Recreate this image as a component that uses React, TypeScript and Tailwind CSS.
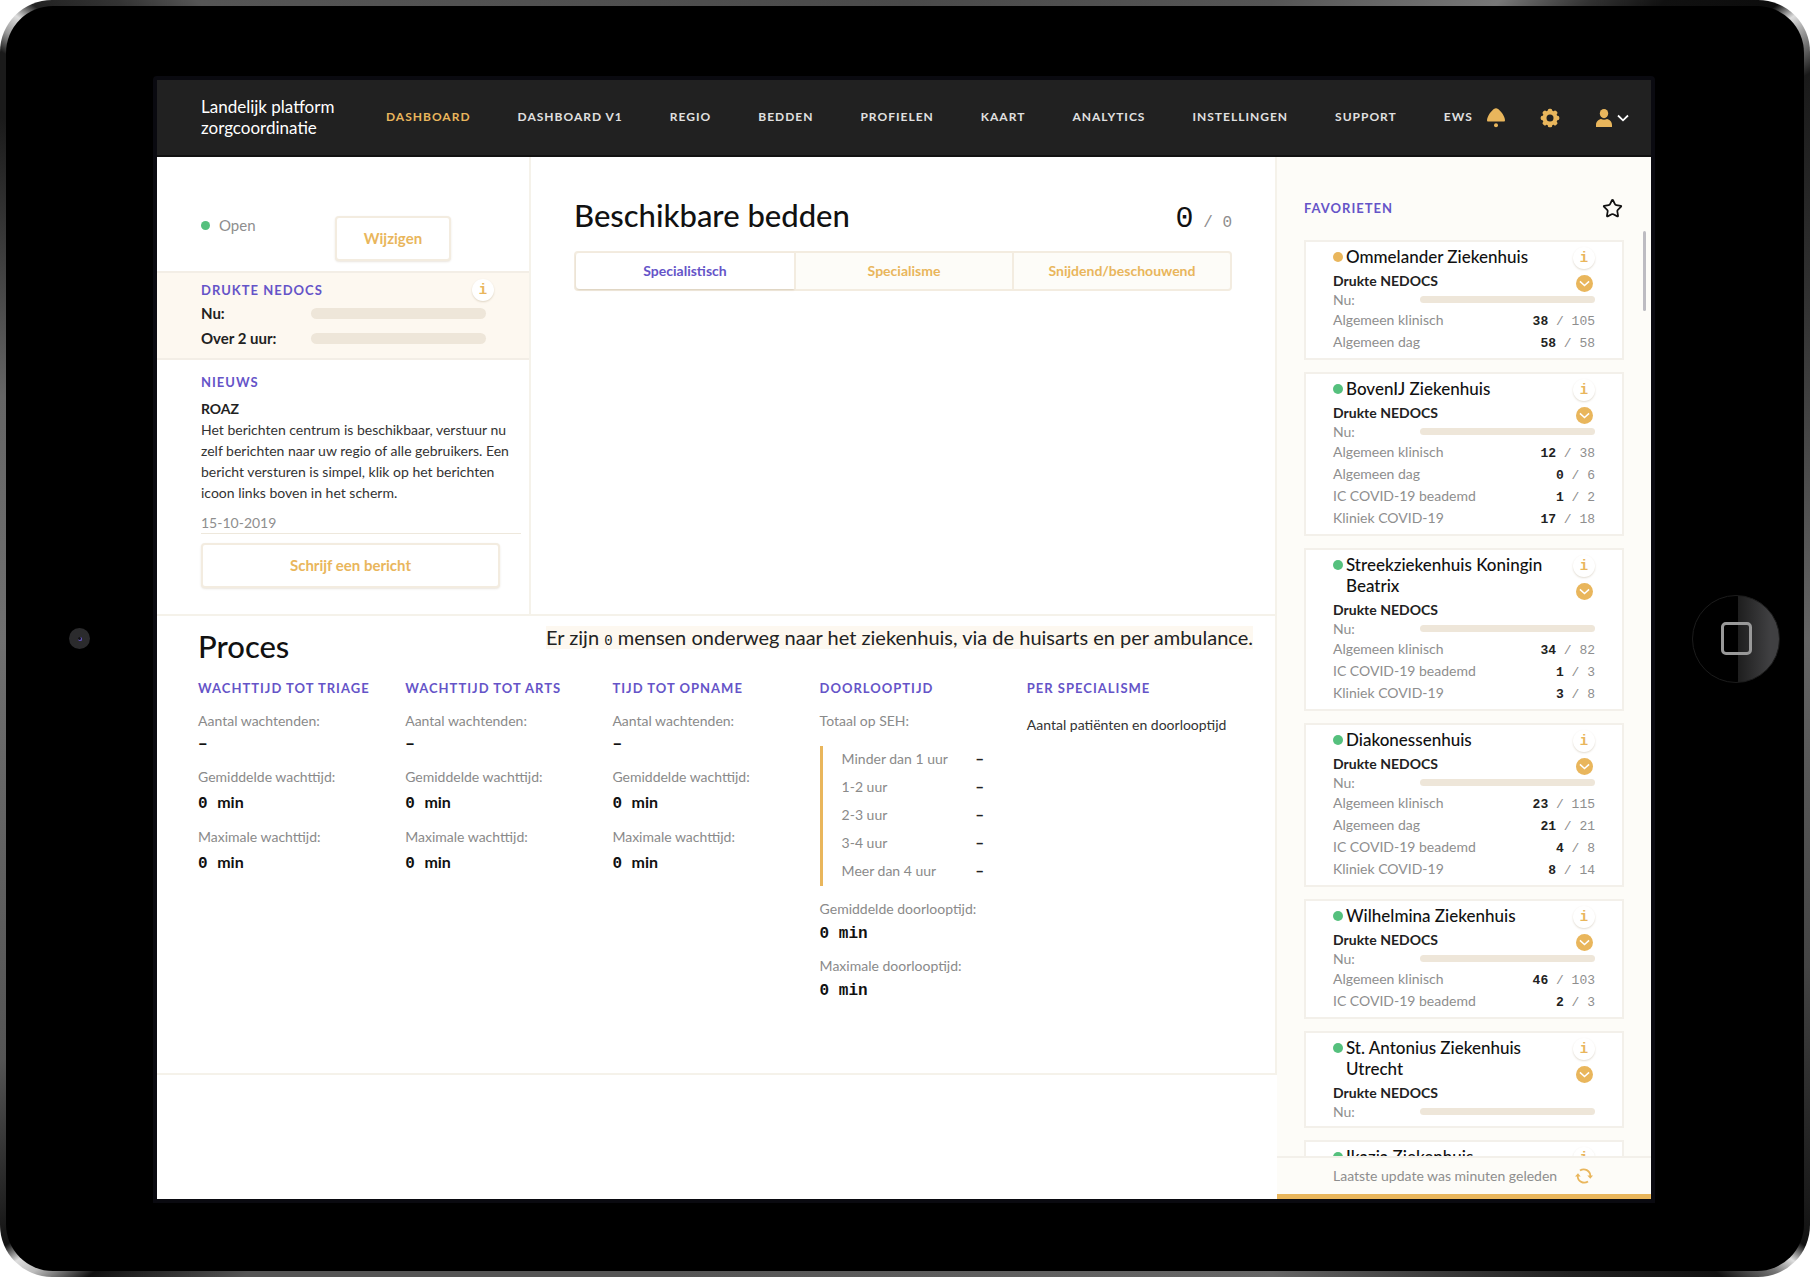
import React from "react";
import { Star } from "lucide-react";

const NAV = ["DASHBOARD", "DASHBOARD V1", "REGIO", "BEDDEN", "PROFIELEN", "KAART", "ANALYTICS", "INSTELLINGEN", "SUPPORT", "EWS"];

type Hospital = { name: string; tone?: "busy"; loading?: boolean; beds: [string, number, number][] };

const HOSPITALS: Hospital[] = [
  { name: "Ommelander Ziekenhuis", tone: "busy", beds: [["Algemeen klinisch", 38, 105], ["Algemeen dag", 58, 58]] },
  { name: "BovenIJ Ziekenhuis", beds: [["Algemeen klinisch", 12, 38], ["Algemeen dag", 0, 6], ["IC COVID-19 beademd", 1, 2], ["Kliniek COVID-19", 17, 18]] },
  { name: "Streekziekenhuis Koningin Beatrix", beds: [["Algemeen klinisch", 34, 82], ["IC COVID-19 beademd", 1, 3], ["Kliniek COVID-19", 3, 8]] },
  { name: "Diakonessenhuis", beds: [["Algemeen klinisch", 23, 115], ["Algemeen dag", 21, 21], ["IC COVID-19 beademd", 4, 8], ["Kliniek COVID-19", 8, 14]] },
  { name: "Wilhelmina Ziekenhuis", beds: [["Algemeen klinisch", 46, 103], ["IC COVID-19 beademd", 2, 3]] },
  { name: "St. Antonius Ziekenhuis Utrecht", beds: [] },
  { name: "Ikazia Ziekenhuis", loading: true, beds: [] },
];

const WAITS = ["WACHTTIJD TOT TRIAGE", "WACHTTIJD TOT ARTS", "TIJD TOT OPNAME"];
const DURATIONS = ["Minder dan 1 uur", "1-2 uur", "2-3 uur", "3-4 uur", "Meer dan 4 uur"];
const TABS = ["Specialistisch", "Specialisme", "Snijdend/beschouwend"];

function Heading({ children }: { children: React.ReactNode }) {
  return <h2 className="text-[13px] leading-4 font-bold tracking-[1px] whitespace-nowrap text-[#6554c8]">{children}</h2>;
}

function InfoButton() {
  return (
    <button aria-label="Informatie" className="flex size-[22px] shrink-0 items-center justify-center rounded-full bg-white font-['Liberation_Mono',monospace] text-sm font-bold text-[#e9b65c] shadow-[0_1px_2px_rgba(120,90,40,0.22)]">
      i
    </button>
  );
}

function BellIcon() {
  return (
    <svg viewBox="0 0 18 20" className="h-5 w-[18px]" fill="#e9b65c">
      <path d="M9 0.300C10.600.3 11.500 1.300 12.700 2.400 14.800 4.200 16.200 6.400 17.200 9c.5 1.300.8 2.300.8 3.300 0 .9-.4 1.300-1.200 1.300H1.200C.4 13.600 0 13.200 0 12.300 0 11.300.3 10.300.8 9 1.800 6.400 3.200 4.200 5.300 2.400 6.500 1.300 7.400.3 9 .3z" />
      <circle cx="9" cy="17.300" r="2" />
    </svg>
  );
}

function GearIcon() {
  return (
    <svg viewBox="0 0 20 20" className="size-5">
      <g fill="#e9b65c">
        {[0, 45, 90, 135].map((a) => (
          <rect key={a} x="7.800" y="0.700" width="4.400" height="18.600" rx="1.600" transform={`rotate(${a} 10 10)`} />
        ))}
        <circle cx="10" cy="10" r="7.600" />
      </g>
      <circle cx="10" cy="10" r="3.500" fill="#212121" />
    </svg>
  );
}

function UserIcon() {
  return (
    <svg viewBox="0 0 16 18" className="h-[18px] w-4" fill="#e9b65c">
      <ellipse cx="8" cy="4.600" rx="4.200" ry="4.600" />
      <path d="M0 18v-2C0 12.800 2.400 10.600 5 10c1.800 1 4.200 1 6 0 2.600.6 5 2.800 5 6v2z" />
    </svg>
  );
}

function RefreshIcon() {
  return (
    <svg viewBox="0 0 18 16" className="h-4 w-[18px]" fill="none" stroke="#e9b65c" strokeWidth="1.800">
      <path d="M5 2.600A6.500 6.500 0 0 1 15.300 8M13 13.400A6.500 6.500 0 0 1 2.700 8" />
      <path d="M12.300 7.500h5.700l-2.700 3.300zM0 8.500h5.700L3 5.200z" fill="#e9b65c" stroke="none" />
    </svg>
  );
}

function HospitalCard({ name, tone, loading, beds }: Hospital) {
  return (
    <article className="shrink-0 border-2 border-[#f3f0ea] bg-white px-[27px] pt-1 pb-[5px]">
      <div className="relative pr-10">
        <h3 className="flex gap-[3px] text-[17px] leading-[21px] font-medium text-[#111]">
          <span className={tone === "busy" ? "mt-[6px] size-[10px] shrink-0 rounded-full bg-[#e9b65c]" : "mt-[6px] size-[10px] shrink-0 rounded-full bg-[#55c07d]"} />
          {name}
        </h3>
        <div className="absolute top-px right-0 flex flex-col items-center gap-1.5">
          <InfoButton />
          <button aria-label="Toon meer" className="flex size-[17px] items-center justify-center rounded-full bg-[#e9b65c]">
            <svg viewBox="0 0 12 8" className="w-[11px]" fill="none" stroke="#fff" strokeWidth="1.600"><path d="M1 1.500 6 6l5-4.500" /></svg>
          </button>
        </div>
      </div>
      {!loading && (
        <>
          <p className="mt-[5px] text-sm leading-[18px] font-bold text-[#222]">Drukte NEDOCS</p>
          <div className="flex h-[19px] items-center justify-between text-sm text-[#8e8e8e]">
            Nu:
            <span className="h-[7px] w-2/3 rounded-full bg-[#eee6d9]" />
          </div>
        </>
      )}
      {beds.map(([label, used, total]) => (
        <div key={label} className="flex h-[22px] items-center justify-between text-sm text-[#8e8e8e]">
          {label}
          <span className="pt-1 font-['Liberation_Mono',monospace] text-[13px] leading-4 whitespace-pre">
            <b className="text-[#222]">{used}</b> / {total}
          </span>
        </div>
      ))}
    </article>
  );
}

function Label({ children }: { children: React.ReactNode }) {
  return <p className="text-sm leading-[22px] text-[#8a8a8a]">{children}</p>;
}

function Minutes() {
  return (
    <p className="mb-2 text-base leading-7 font-bold whitespace-pre text-[#111]">
      <span className="font-['Liberation_Mono',monospace]">0 </span>min
    </p>
  );
}

function MonoMinutes() {
  return <p className="mb-[7px] font-['Liberation_Mono',monospace] text-base leading-7 font-bold text-[#111]">0 min</p>;
}

function PressureRow({ label }: { label: string }) {
  return (
    <div className="flex h-[25px] items-center">
      <span className="w-[110px] text-[15px] font-bold text-[#222]">{label}</span>
      <span className="h-[11px] w-[175px] rounded-full bg-[#eee6d9]" />
    </div>
  );
}

export default function App() {
  return (
    <div className="h-screen w-full bg-white font-[Lato,sans-serif]">
      <div className="h-full rounded-[52px] bg-[conic-gradient(#4a4a4a_0deg,#555_30deg,#777_43deg,#333_47deg,#111_50deg,#0c0c0c_54deg,#ddd_55deg,#999_56deg,#1a1a1a_58deg,#333_70deg,#666_90deg,#444_110deg,#1a1a1a_122deg,#111_124deg,#ddd_125deg,#777_126deg,#111_128deg,#222_134deg,#666_150deg,#555_200deg,#555_226deg,#111_232deg,#bbb_234deg,#ddd_235deg,#111_236deg,#222_238deg,#555_245deg,#707070_270deg,#666_285deg,#1a1a1a_300deg,#1a1a1a_303deg,#999_304deg,#ddd_305deg,#222_306deg,#333_309deg,#555_312deg,#4a4a4a_360deg)] p-[6px]">
        <div className="flex h-full rounded-[47px] bg-black">
          <div className="flex w-[147px] shrink-0 items-center justify-center">
            <span className="flex size-[21px] items-center justify-center rounded-full bg-[#2b2b2d]">
              <i className="size-1 rounded-full border-r border-b border-[#6a5acd] bg-[#111]" />
            </span>
          </div>

          <div className="mt-[70px] mb-[68px] flex min-w-0 flex-1 flex-col rounded-t-[4px] border-4 border-[#0a0a10] bg-white">
            <header className="flex h-[77px] shrink-0 items-center border-b-2 border-[#111] bg-[#212121] pr-[22px] pb-0.5 pl-11">
              <p className="w-[185px] shrink-0 text-[17px] leading-[21px] text-white">Landelijk platform<br />zorgcoordinatie</p>
              <nav className="flex gap-[47px]">
                {NAV.map((n, i) => (
                  <a key={n} href="#" className={i === 0 ? "text-xs font-bold tracking-[1px] whitespace-nowrap text-[#e9b65c]" : "text-xs font-bold tracking-[1px] whitespace-nowrap text-[#e0e0e0]"}>{n}</a>
                ))}
              </nav>
              <div className="ml-auto flex items-center pt-0.5">
                <button aria-label="Meldingen"><BellIcon /></button>
                <button aria-label="Instellingen" className="ml-[35px]"><GearIcon /></button>
                <button aria-label="Account" className="ml-9 flex items-center gap-[5px]">
                  <UserIcon />
                  <svg viewBox="0 0 12 8" className="h-2 w-3" fill="none" stroke="#fff" strokeWidth="1.800"><path d="M1 1.500 6 6.300l5-4.800" /></svg>
                </button>
              </div>
            </header>

            <div className="flex min-h-0 flex-1">
              <main className="flex min-w-0 flex-1 flex-col">
                <div className="flex h-[459px] shrink-0 border-r-2 border-b-2 border-[#f5f2ea]">
                  <section className="w-[374px] shrink-0 border-r-2 border-[#f5f2ea]">
                    <div className="flex h-[114px] pt-[59px] pl-11">
                      <p className="flex h-[18px] w-[134px] items-center gap-[9px] text-[15px] text-[#8e8e8e]">
                        <span className="size-[9px] rounded-full bg-[#55c07d]" />Open
                      </p>
                      <button className="h-[45px] w-[116px] rounded border-2 border-[#f3ece0] bg-white text-[15px] font-bold text-[#e9b65c] shadow-[0_1px_2px_rgba(120,90,40,0.15)]">Wijzigen</button>
                    </div>
                    <div className="border-y-2 border-[#f3eee6] bg-[#fdf8f0] pt-[6px] pr-[35px] pb-[7px] pl-11">
                      <div className="flex h-[22px] items-center justify-between">
                        <Heading>DRUKTE NEDOCS</Heading>
                        <InfoButton />
                      </div>
                      <PressureRow label="Nu:" />
                      <PressureRow label="Over 2 uur:" />
                    </div>
                    <div className="pt-[14px] pr-2 pl-11">
                      <Heading>NIEUWS</Heading>
                      <h3 className="mt-[9px] text-sm leading-5 font-bold text-[#222]">ROAZ</h3>
                      <p className="text-sm leading-[21px] text-[#333]">Het berichten centrum is beschikbaar, verstuur nu zelf berichten naar uw regio of alle gebruikers. Een bericht versturen is simpel, klik op het berichten icoon links boven in het scherm.</p>
                      <p className="mt-[10px] border-b border-[#eee8dc] text-sm leading-5 text-[#8e8e8e]">15-10-2019</p>
                      <button className="mt-[9px] h-[45px] w-[299px] rounded border-2 border-[#f3ece0] bg-white text-[15px] font-bold text-[#e9b65c] shadow-[0_1px_2px_rgba(120,90,40,0.15)]">Schrijf een bericht</button>
                    </div>
                  </section>

                  <section className="min-w-0 flex-1 px-[43px] pt-10">
                    <div className="flex items-baseline justify-between">
                      <h1 className="text-[31px] leading-9 font-medium text-[#111]">Beschikbare bedden</h1>
                      <p className="font-['Liberation_Mono',monospace] text-base whitespace-pre text-[#8e8e8e]">
                        <span className="text-[30px] leading-9 text-[#111]">0</span> / 0
                      </p>
                    </div>
                    <div role="tablist" className="mt-[14px] grid h-10 grid-cols-3 rounded border-2 border-[#f3ece0] bg-[#fdfcf8] text-sm font-bold text-[#e9b65c]">
                      {TABS.map((t, i) => (
                        <button key={t} role="tab" aria-selected={i === 0} className={i === 0 ? "rounded-l bg-white text-[#6554c8] shadow-[0_1px_2px_rgba(120,90,40,0.2)]" : "border-l-2 border-[#f3ece0]"}>{t}</button>
                      ))}
                    </div>
                  </section>
                </div>

                <section className="h-[459px] shrink-0 border-r-2 border-b-2 border-[#f5f2ea] pt-[10px]">
                  <div className="flex items-start justify-between pr-[22px] pl-[41px]">
                    <h2 className="mt-0.5 text-[31px] leading-9 font-medium text-[#111]">Proces</h2>
                    <p className="bg-[#fdf8f0] text-xl leading-[23px] text-[#222]">
                      Er zijn <span className="font-['Liberation_Mono',monospace] text-sm leading-none">0</span> mensen onderweg naar het ziekenhuis, via de huisarts en per ambulance.
                    </p>
                  </div>
                  <div className="mt-4 grid grid-cols-5 px-[41px]">
                    {WAITS.map((w) => (
                      <div key={w}>
                        <div className="mb-[14px]"><Heading>{w}</Heading></div>
                        <Label>Aantal wachtenden:</Label>
                        <p className="mb-[10px] font-['Liberation_Mono',monospace] text-base leading-6 font-bold text-[#111]">–</p>
                        <Label>Gemiddelde wachttijd:</Label>
                        <Minutes />
                        <Label>Maximale wachttijd:</Label>
                        <Minutes />
                      </div>
                    ))}
                    <div>
                      <div className="mb-[14px]"><Heading>DOORLOOPTIJD</Heading></div>
                      <Label>Totaal op SEH:</Label>
                      <dl className="mt-[14px] mb-3 border-l-[3px] border-[#e9b65c] pl-[19px] text-sm text-[#8a8a8a]">
                        {DURATIONS.map((d) => (
                          <div key={d} className="flex h-7 items-center pb-0.5">
                            <dt className="w-[134px]">{d}</dt>
                            <dd className="font-['Liberation_Mono',monospace] font-bold text-[#222]">–</dd>
                          </div>
                        ))}
                      </dl>
                      <Label>Gemiddelde doorlooptijd:</Label>
                      <MonoMinutes />
                      <Label>Maximale doorlooptijd:</Label>
                      <MonoMinutes />
                    </div>
                    <div>
                      <Heading>PER SPECIALISME</Heading>
                      <p className="mt-[18px] text-sm leading-[22px] whitespace-nowrap text-[#333]">Aantal patiënten en doorlooptijd</p>
                    </div>
                  </div>
                </section>
              </main>

              <aside className="relative flex w-[374px] shrink-0 flex-col bg-[#fdfcf8]">
                <div className="flex h-[83px] shrink-0 items-center justify-between pt-[19px] pr-7 pl-[27px]">
                  <Heading>FAVORIETEN</Heading>
                  <button aria-label="Favorieten bewerken"><Star className="size-[21px] text-[#111]" strokeWidth={2} /></button>
                </div>
                <div className="flex min-h-0 flex-1 flex-col gap-3 overflow-hidden px-[27px]">
                  {HOSPITALS.map((h) => <HospitalCard key={h.name} {...h} />)}
                </div>
                <footer className="flex h-[43px] shrink-0 items-center justify-between border-t-2 border-b-[5px] border-t-[#f3f0ea] border-b-[#e9b65c] pr-[58px] pl-14 text-sm text-[#8e8e8e]">
                  Laatste update was minuten geleden
                  <button aria-label="Vernieuwen"><RefreshIcon /></button>
                </footer>
                <span className="absolute top-[74px] right-[5px] h-20 w-[3px] rounded-full bg-[#bdbcc2]" />
              </aside>
            </div>
          </div>

          <div className="flex w-[149px] shrink-0 items-center justify-center pl-[13px]">
            <button aria-label="Home" className="flex size-[88px] items-center justify-center rounded-full border border-[#1c1c1c] bg-[linear-gradient(90deg,#000_52%,#1e1e1e_52%,#404042_90%)]">
              <span className="h-[33px] w-[31px] rounded-[5px] border-[3px] border-[#999]" />
            </button>
          </div>
        </div>
      </div>
    </div>
  );
}
